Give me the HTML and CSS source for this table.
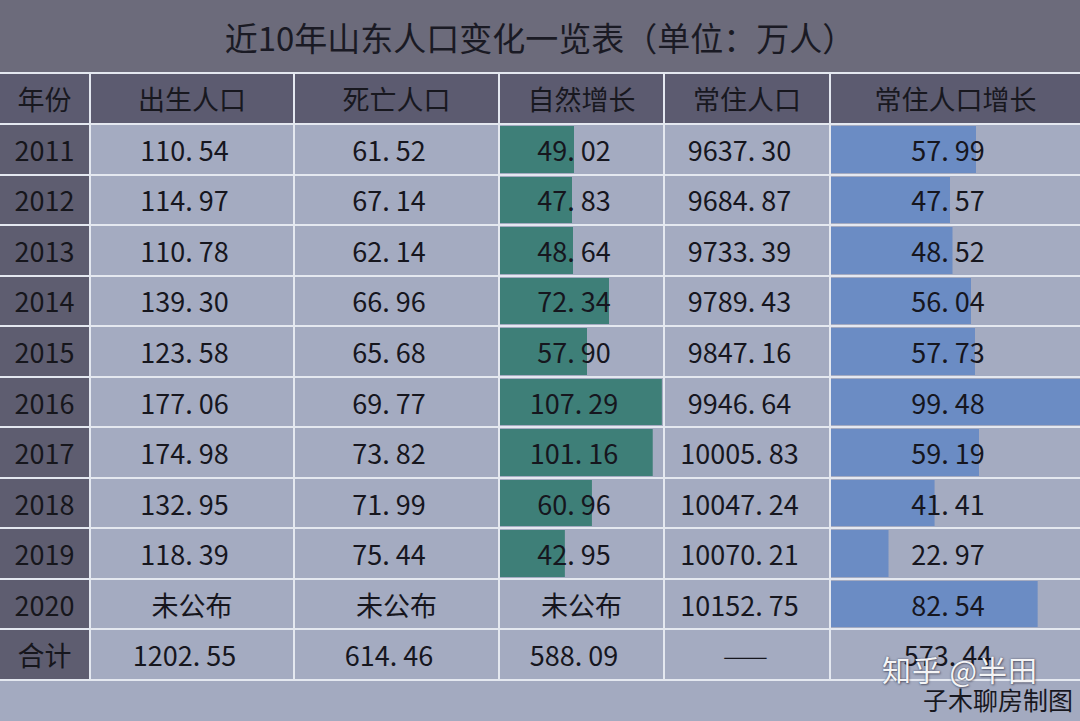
FILE: index.html
```html
<!DOCTYPE html>
<html lang="zh">
<head>
<meta charset="utf-8">
<title>近10年山东人口变化一览表</title>
<link rel="stylesheet" href="styles.css">
</head>
<body>
<div class="sheet">
  <div class="title">近10年山东人口变化一览表（单位：万人）</div>
  <div class="grid">
    <div class="hd">年份</div><div class="hd">出生人口</div><div class="hd">死亡人口</div><div class="hd">自然增长</div><div class="hd">常住人口</div><div class="hd">常住人口增长</div>

    <div class="yr">2011</div><div class="c n">110<span class="p">.</span>54</div><div class="c n">61<span class="p">.</span>52</div><div class="c n t" style="--w:45.4%">49<span class="p">.</span>02</div><div class="c n">9637<span class="p">.</span>30</div><div class="c n b" style="--w:58.3%">57<span class="p">.</span>99</div>

    <div class="yr">2012</div><div class="c n">114<span class="p">.</span>97</div><div class="c n">67<span class="p">.</span>14</div><div class="c n t" style="--w:44.3%">47<span class="p">.</span>83</div><div class="c n">9684<span class="p">.</span>87</div><div class="c n b" style="--w:47.8%">47<span class="p">.</span>57</div>

    <div class="yr">2013</div><div class="c n">110<span class="p">.</span>78</div><div class="c n">62<span class="p">.</span>14</div><div class="c n t" style="--w:45.0%">48<span class="p">.</span>64</div><div class="c n">9733<span class="p">.</span>39</div><div class="c n b" style="--w:48.8%">48<span class="p">.</span>52</div>

    <div class="yr">2014</div><div class="c n">139<span class="p">.</span>30</div><div class="c n">66<span class="p">.</span>96</div><div class="c n t" style="--w:67.0%">72<span class="p">.</span>34</div><div class="c n">9789<span class="p">.</span>43</div><div class="c n b" style="--w:56.3%">56<span class="p">.</span>04</div>

    <div class="yr">2015</div><div class="c n">123<span class="p">.</span>58</div><div class="c n">65<span class="p">.</span>68</div><div class="c n t" style="--w:53.6%">57<span class="p">.</span>90</div><div class="c n">9847<span class="p">.</span>16</div><div class="c n b" style="--w:58.0%">57<span class="p">.</span>73</div>

    <div class="yr">2016</div><div class="c n">177<span class="p">.</span>06</div><div class="c n">69<span class="p">.</span>77</div><div class="c n t" style="--w:99.3%">107<span class="p">.</span>29</div><div class="c n">9946<span class="p">.</span>64</div><div class="c n b" style="--w:100%">99<span class="p">.</span>48</div>

    <div class="yr">2017</div><div class="c n">174<span class="p">.</span>98</div><div class="c n">73<span class="p">.</span>82</div><div class="c n t" style="--w:93.7%">101<span class="p">.</span>16</div><div class="c n">10005<span class="p">.</span>83</div><div class="c n b" style="--w:59.5%">59<span class="p">.</span>19</div>

    <div class="yr">2018</div><div class="c n">132<span class="p">.</span>95</div><div class="c n">71<span class="p">.</span>99</div><div class="c n t" style="--w:56.4%">60<span class="p">.</span>96</div><div class="c n">10047<span class="p">.</span>24</div><div class="c n b" style="--w:41.6%">41<span class="p">.</span>41</div>

    <div class="yr">2019</div><div class="c n">118<span class="p">.</span>39</div><div class="c n">75<span class="p">.</span>44</div><div class="c n t" style="--w:39.8%">42<span class="p">.</span>95</div><div class="c n">10070<span class="p">.</span>21</div><div class="c n b" style="--w:23.1%">22<span class="p">.</span>97</div>

    <div class="yr">2020</div><div class="c">未公布</div><div class="c">未公布</div><div class="c">未公布</div><div class="c n">10152<span class="p">.</span>75</div><div class="c n b" style="--w:83.0%">82<span class="p">.</span>54</div>

    <div class="yr">合计</div><div class="c n">1202<span class="p">.</span>55</div><div class="c n">614<span class="p">.</span>46</div><div class="c n">588<span class="p">.</span>09</div><div class="c dash">——</div><div class="c n">573<span class="p">.</span>44</div>
  </div>
  <div class="foot"></div>
  <div class="wm">知乎 @半田</div>
  <div class="credit">子木聊房制图</div>
</div>
</body>
</html>
```

FILE: styles.css
```css
html, body {
  margin: 0;
  padding: 0;
  background: #a3aac0;
}
.sheet {
  position: relative;
  width: 1080px;
  height: 721px;
  overflow: hidden;
  font-family: "Noto Sans CJK SC", "Noto Sans", sans-serif;
  color: #16161e;
  background: #a3aac0;
}
.title {
  box-sizing: border-box;
  height: 74px;
  padding-top: 2px;
  background: #6c6b7b;
  display: flex;
  align-items: center;
  justify-content: center;
  font-size: 33px;
  color: #1a1a24;
  border-bottom: 2px solid #e4e8f0;
}
.grid {
  display: grid;
  grid-template-columns: 89px 202px 203px 163px 164px 249px;
  grid-template-rows: 49px;
  grid-auto-rows: 48.55px;
  gap: 2px;
  background: #e4e8f0;
  padding-bottom: 2px;
}
.grid > div {
  display: flex;
  align-items: center;
  justify-content: center;
  font-size: 27px;
  line-height: 1;
}
.hd {
  background: #5c5b70;
  color: #18181f;
}
.yr {
  background: #5e5d70;
  color: #16161c;
}
.c {
  background-color: #a4abc1;
}
.n {
  padding-right: 15px;
}
.p {
  margin-right: 6px;
}
.dash {
  letter-spacing: 3px;
  font-weight: 300;
}
.t {
  background-image: linear-gradient(#3e7f78, #3e7f78);
  background-repeat: no-repeat;
  background-size: var(--w) calc(100% - 2px);
  background-position: 0 1px;
}
.b {
  background-image: linear-gradient(#6b8cc4, #6b8cc4);
  background-repeat: no-repeat;
  background-size: var(--w) calc(100% - 2px);
  background-position: 0 1px;
}
.foot {
  height: 40px;
  background: #a3aac0;
}
.wm {
  position: absolute;
  left: 882px;
  top: 655px;
  font-size: 29px;
  line-height: 1;
  color: rgba(255, 255, 255, 0.94);
  text-shadow: 0 0 2px rgba(40, 40, 60, 0.6), 1px 1px 2px rgba(40, 40, 60, 0.5);
  letter-spacing: 1px;
  white-space: nowrap;
}
.credit {
  position: absolute;
  right: 7px;
  top: 687px;
  font-size: 25px;
  line-height: 1;
  color: #18181f;
  white-space: nowrap;
}
```
